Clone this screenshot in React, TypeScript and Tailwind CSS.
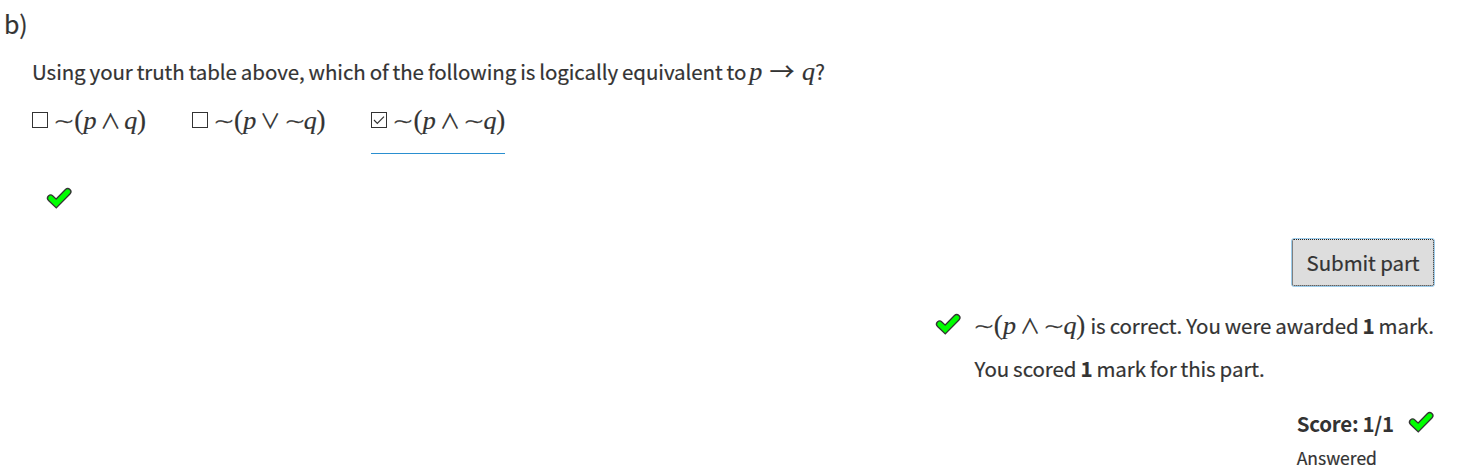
import React from "react";

type Kind = "tilde" | "open" | "close" | "p" | "q" | "op" | "arrow";

const styles: Record<Kind, string> = {
  tilde: "w-[19.8px] translate-y-[2px] scale-x-[1.25] font-['DejaVu_Sans_Light','DejaVu_Sans',sans-serif] font-extralight text-[27px] [-webkit-text-stroke:0.3px_#333]",
  open: "w-[9.7px] font-['Liberation_Serif',serif] text-[27px]",
  close: "w-[9.7px] font-['Liberation_Serif',serif] text-[27px]",
  p: "w-[12.8px] font-['Liberation_Serif',serif] italic text-[26px]",
  q: "w-[11.7px] font-['Liberation_Serif',serif] italic text-[26px]",
  op: "w-[16.7px] ml-[5.9px] mr-[6px] font-['Noto_Sans_CJK_SC',sans-serif] text-[20.5px]",
  arrow: "w-[25px] ml-[7.5px] mr-[8px] translate-y-px font-['Noto_Sans_CJK_SC',sans-serif] text-[25px]",
};

const kinds: Record<string, Kind> = {
  "∼": "tilde", "(": "open", ")": "close", p: "p", q: "q", "∧": "op", "∨": "op", "→": "arrow",
};

function Formula({ children }: { children: string }) {
  return (
    <span className="inline-flex h-6 items-baseline leading-6 tracking-normal [word-spacing:0]">
      {Array.from(children).map((c, i) => (
        <span key={i} className={`inline-flex shrink-0 justify-center ${styles[kinds[c]]}`}>{c}</span>
      ))}
    </span>
  );
}

function Tick() {
  return (
    <svg width="26" height="22" viewBox="0 0 26 22" className="shrink-0">
      <path d="M4.7 11.2 L10.2 16.4 L21.7 4.8" fill="none" stroke="#333" strokeWidth="7.6" strokeLinecap="round" />
      <path d="M4.7 11.2 L10.2 16.4 L21.7 4.8" fill="none" stroke="#00ff00" strokeWidth="5" strokeLinecap="round" />
    </svg>
  );
}

function Choice({ formula, checked = false }: { formula: string; checked?: boolean }) {
  return (
    <label className={`flex h-[46px] items-start border-b ${checked ? "border-[#2a8fd0]" : "border-transparent"}`}>
      <span className="mt-1 mr-[6px] flex size-4 items-center justify-center border border-[#333]">
        {checked && (
          <svg width="12" height="10" viewBox="0 0 12 10" className="shrink-0">
            <path d="M1 5 L4.3 8.3 L11 1.6" fill="none" stroke="#333" strokeWidth="1.2" />
          </svg>
        )}
      </span>
      <Formula>{formula}</Formula>
    </label>
  );
}

export default function App() {
  return (
    <main className="flex h-[469px] w-[1458px] flex-col overflow-hidden bg-white font-['Noto_Sans_CJK_SC',sans-serif] text-[20.5px] leading-6 tracking-[-0.08px] text-[#333] [word-spacing:-0.5px] [-webkit-text-stroke:0.2px_#333]">
      <h2 className="mt-[11px] ml-1 h-6 text-[25px]">b)</h2>
      <p className="mt-[22px] ml-8 flex h-6 items-baseline whitespace-nowrap">
        <span className="mr-[3px]">Using your truth table above, which of the following is logically equivalent to</span>
        <Formula>p→q</Formula>
        <span className="ml-px">?</span>
      </p>
      <div className="mt-[27px] ml-8 flex gap-[45.6px]">
        <Choice formula="∼(p∧q)" />
        <Choice formula="∼(p∨∼q)" />
        <Choice formula="∼(p∧∼q)" checked />
      </div>
      <div className="mt-[33px] ml-[46px] h-[22px]"><Tick /></div>
      <div className="mt-[29px] mr-[23px] flex flex-col items-end">
        <button className="h-[49px] w-[144px] rounded-[3px] border border-[#9dcdec] bg-[#ddd] whitespace-nowrap tracking-[-0.1px]">
          <span className="flex h-full items-center justify-center rounded-[2px] border border-dotted border-[#222] pb-[2px]">Submit part</span>
        </button>
        <div className="mt-[26px] mr-px flex h-[69px]">
          <Tick />
          <div className="ml-[13px] whitespace-nowrap">
            <p className="flex h-6 items-baseline">
              <Formula>∼(p∧∼q)</Formula>
              <span className="ml-[5px]">is correct. You were awarded <b>1</b> mark.</span>
            </p>
            <p className="mt-[19px] ml-px">You scored <b>1</b> mark for this part.</p>
          </div>
        </div>
        <div className="mt-[29px] mr-px flex flex-col">
          <div className="flex h-6 gap-[14px] [-webkit-text-stroke:0]"><b className="tracking-[-0.2px]">Score: 1/1</b><Tick /></div>
          <span className="mt-[11px] text-[17.5px] tracking-normal">Answered</span>
        </div>
      </div>
    </main>
  );
}
